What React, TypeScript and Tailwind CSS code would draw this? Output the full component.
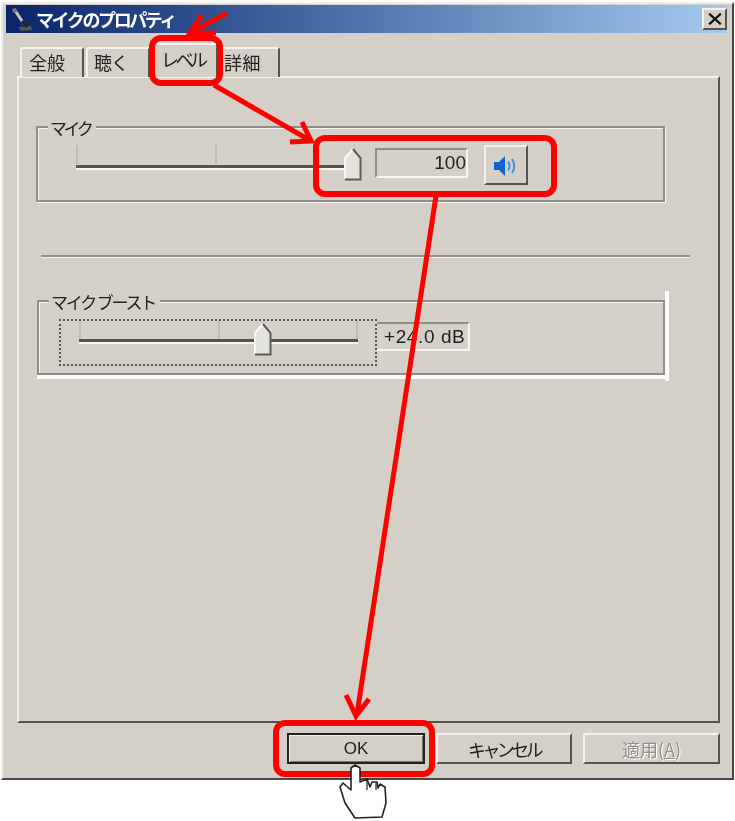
import React from 'react';

const jp = "font-['Noto_Sans_CJK_JP','Liberation_Sans',sans-serif]";

const raised = 'border-2 border-t-[#f4f3ef] border-l-[#f4f3ef] border-r-[#55544f] border-b-[#55544f]';
const sunken = 'border-2 border-t-[#8f8e89] border-l-[#8f8e89] border-r-[#f6f5f1] border-b-[#f6f5f1]';

const Tab = ({ label, className }: { label: string; className: string }) => (
  <div className={`flex items-center whitespace-nowrap text-[#222] bg-[#d4d0c8] rounded-t-[3px] border-t-2 border-l-2 border-r-2 border-t-[#f4f3ef] border-l-[#f4f3ef] border-r-[#55544f] ${className}`}>
    {label}
  </div>
);

const Thumb = ({ className }: { className: string }) => (
  <svg viewBox="0 0 18 34" className={`absolute w-[18px] h-[34px] ${className}`}>
    <path d="M1 33V11L9 2L16 11V33Z" fill="#e4e2dc" />
    <path d="M1 32V11L9 2" fill="none" stroke="#f8f8f5" strokeWidth="2" />
    <path d="M9 2L16.5 11V32.5H1" fill="none" stroke="#5c5b56" strokeWidth="2" />
  </svg>
);

const Tick = ({ x }: { x: string }) => <span className={`absolute top-0 w-[2px] h-[19px] bg-[#bdbbb4] ${x}`} />;

const Button = ({ children, className }: { children: React.ReactNode; className: string }) => (
  <div className={`flex items-center justify-center text-[18px] leading-none bg-[#d4d0c8] ${className}`}>{children}</div>
);

export default function App() {
  return (
    <div className={`relative w-[735px] h-[821px] bg-white overflow-hidden ${jp}`}>
      <div className="ml-px mt-[2px] w-[733px] h-[778px] bg-[#d4d0c8] border-2 border-t-[#efede8] border-l-[#efede8] border-r-[#4a4944] border-b-[#4a4944] pt-px pl-[3px] pr-[5px] blur-[0.4px]">
        {/* title bar */}
        <div className="flex items-center h-[28px] bg-gradient-to-r from-[#0a246a] to-[#a6caf0]">
          <svg viewBox="0 0 24 26" className="ml-[3px] w-[24px] h-[26px] shrink-0">
            <path d="M5 3L15 18" stroke="#c9c6bb" strokeWidth="3" />
            <path d="M3 3L7 2L8 6L4 7Z" fill="#77756c" />
            <path d="M9 21L22 20L23 24L12 25Z" fill="#55544c" />
            <path d="M13 15L18 21" stroke="#222" strokeWidth="3" />
          </svg>
          <span className="ml-[3px] text-white font-bold text-[18px] leading-none tracking-[-2.4px] whitespace-nowrap">マイクのプロパティ</span>
          <Button className={`ml-auto w-[25px] h-[22px] ${raised}`}>
            <svg viewBox="0 0 12 10" className="w-[14px] h-[12px]">
              <path d="M1 0.5L11 9.5M11 0.5L1 9.5" stroke="#111" strokeWidth="2" />
            </svg>
          </Button>
        </div>

        {/* tabs */}
        <div className="relative z-10 flex items-end h-[44px] ml-[14px] -mb-[1px] text-[18px] leading-none">
          <Tab label="全般" className="w-[64px] h-[30px] pl-[7px] pb-[3px]" />
          <Tab label="聴く" className="ml-[2px] w-[64px] h-[30px] pl-[6px] pb-[3px] border-r-0 tracking-[-1px]" />
          <Tab label="レベル" className="w-[68px] h-[34px] pl-[9px] pb-[5px] border-r-0 tracking-[-3.5px]" />
          <Tab label="詳細" className="w-[62px] h-[30px] pl-[4px] pb-[3px] tracking-[0.5px]" />
        </div>

        {/* tab panel */}
        <div className="ml-[11px] w-[703px] h-[647px] border-2 border-t-[#f4f3ef] border-l-[#f4f3ef] border-r-[#55544f] border-b-[#55544f] pt-[48px] pl-[17px] text-[#222]">
          {/* level group */}
          <div className="relative flex items-start w-[629px] h-[76px] border-2 border-[#8f8e89] shadow-[inset_1px_1px_0_#f6f5f1,1px_1px_0_#f6f5f1] pt-[17px] pl-[38px]">
            <span className="absolute left-[10px] -top-[11px] px-[2px] bg-[#d4d0c8] text-[17px] leading-[22px] tracking-[-3.5px] pr-[6px]">マイク</span>
            <div className="relative w-[286px] h-[38px] shrink-0">
              <Tick x="left-0" />
              <Tick x="left-[139px]" />
              <span className="absolute left-0 top-[20px] w-[272px] h-[3px] bg-[#55544f]" />
              <span className="absolute left-0 top-[23px] w-[272px] h-[2px] bg-[#f6f5f1]" />
              <Thumb className="left-[268px] top-[2px]" />
            </div>
            <div className={`ml-[13px] mt-[3px] w-[93px] h-[30px] shrink-0 flex items-center justify-end pb-px font-['Liberation_Sans',sans-serif] text-[19px] leading-none ${sunken}`}>100</div>
            <Button className={`ml-[16px] w-[44px] h-[40px] shrink-0 ${raised}`}>
              <svg viewBox="0 0 26 22" className="mt-[2px] w-[26px] h-[22px]">
                <path d="M1 7H6L12 1V21L6 15H1Z" fill="#0a64d2" />
                <path d="M15 6.5C17 9 17 13 15 15.5M19 4C22 8 22 14 19 18" fill="none" stroke="#3d8ee6" strokeWidth="2" />
              </svg>
            </Button>
          </div>

          {/* separator */}
          <div className="ml-[5px] mt-[53px] w-[649px] h-[2px] bg-[#8f8e89] shadow-[0_1px_0_#f6f5f1]" />

          {/* boost group */}
          <div className="relative flex items-start ml-px mt-[43px] w-[628px] h-[75px] border-2 border-[#8f8e89] shadow-[inset_1px_1px_0_#f6f5f1,0_4px_0_#fff] pt-[17px] pl-[20px]">
            <span className="absolute left-[10px] -top-[11px] px-[2px] bg-[#d4d0c8] text-[17px] leading-[22px] tracking-[-2.2px] pr-[5px] whitespace-nowrap">マイク ブースト</span>
            <span className="absolute -right-[6px] -top-[11px] w-[4px] h-[90px] bg-white" />
            <div className="relative w-[318px] h-[47px] shrink-0 border-2 border-dotted border-[#555]">
              <div className="absolute left-[18px] top-0 w-[280px] h-[40px]">
                <Tick x="left-0" />
                <Tick x="left-[139px]" />
                <Tick x="left-[277px]" />
                <span className="absolute left-0 top-[18px] w-[279px] h-[3px] bg-[#55544f]" />
                <span className="absolute left-0 top-[21px] w-[279px] h-[2px] bg-[#f6f5f1]" />
              </div>
              <Thumb className="left-[193px] top-[1px]" />
            </div>
            <div className="mt-[3px] w-[93px] h-[29px] shrink-0 flex items-center pl-[7px] whitespace-nowrap font-['Liberation_Sans',sans-serif] text-[19px] leading-none tracking-[0.6px] border-r-2 border-b-2 border-t-2 border-t-[#8f8e89] border-r-[#f6f5f1] border-b-[#f6f5f1]">+24.0 dB</div>
          </div>
        </div>

        {/* footer buttons */}
        <div className="flex justify-end gap-[11px] mt-[10px] pr-[7px]">
          <Button className="w-[138px] h-[31px] text-[#222] !text-[17px] font-['Liberation_Sans',sans-serif] border-2 border-[#222] shadow-[inset_1px_1px_0_#f4f3ef,inset_-1px_-1px_0_#77766f]">OK</Button>
          <Button className={`w-[136px] h-[31px] text-[#222] tracking-[-3.6px] ${raised}`}>キャンセル</Button>
          <Button className={`w-[137px] h-[31px] text-[#8f8e89] [text-shadow:1px_1px_0_#fff] ${raised}`}>
            適用(<span className="underline">A</span>)
          </Button>
        </div>
      </div>

      {/* red annotations and pointer over the dialog */}
      <svg viewBox="0 0 735 821" className="absolute inset-0 w-[735px] h-[821px]">
        <g fill="none" stroke="#ff0000" strokeWidth="6" strokeLinecap="round" strokeLinejoin="round">
          <rect x="152" y="38" width="68" height="45" rx="9" />
          <rect x="316" y="138" width="238" height="56" rx="9" />
          <rect x="276" y="723" width="156" height="51" rx="9" />
        </g>
        <g fill="none" stroke="#ff0000" strokeWidth="5" strokeLinecap="butt" strokeLinejoin="miter">
          <path d="M227 13L190 33" />
          <path d="M202 15L190 33L216 33" />
          <path d="M214 85L311 141" />
          <path d="M302 122L311 141L290 142" />
          <path d="M436 196L357 714" />
          <path d="M346 695L356 716L369 699" />
        </g>
        <path
          d="M351 790V768L355 765L360 768V782L367 779L370 787L372 782L377 782L378 788L380 784L385 787L386 803L382 817L355 818L345 803L340 787L343 783Z"
          fill="#fff"
          stroke="#222"
          strokeWidth="1.6"
          strokeLinejoin="round"
        />
        <path d="M367 780V790M376 783V790" stroke="#222" strokeWidth="1.2" />
      </svg>
    </div>
  );
}
